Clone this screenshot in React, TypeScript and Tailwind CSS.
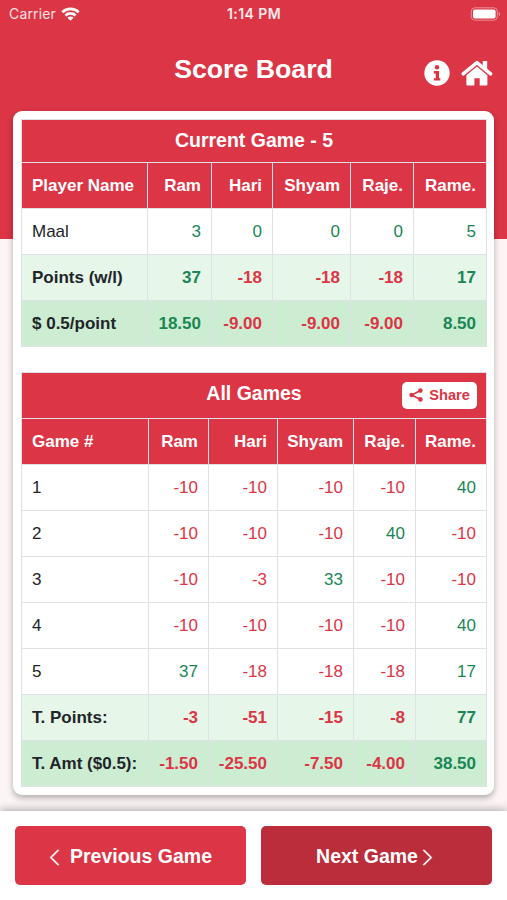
import React from "react";
import clsx from "clsx";
import { BsChevronLeft, BsChevronRight } from "react-icons/bs";

type Row = {
  label: string;
  values: string[];
  variant?: "points" | "amount";
};

type ScoreTableProps = {
  title: string;
  firstColumn: string;
  widths: number[];
  rows: Row[];
  titleClass: string;
  action?: React.ReactNode;
};

const players = ["Ram", "Hari", "Shyam", "Raje.", "Rame."];

const currentGame: Row[] = [
  { label: "Maal", values: ["3", "0", "0", "0", "5"] },
  { label: "Points (w/l)", values: ["37", "-18", "-18", "-18", "17"], variant: "points" },
  { label: "$ 0.5/point", values: ["18.50", "-9.00", "-9.00", "-9.00", "8.50"], variant: "amount" },
];

const allGames: Row[] = [
  { label: "1", values: ["-10", "-10", "-10", "-10", "40"] },
  { label: "2", values: ["-10", "-10", "-10", "40", "-10"] },
  { label: "3", values: ["-10", "-3", "33", "-10", "-10"] },
  { label: "4", values: ["-10", "-10", "-10", "-10", "40"] },
  { label: "5", values: ["37", "-18", "-18", "-18", "17"] },
  { label: "T. Points:", values: ["-3", "-51", "-15", "-8", "77"], variant: "points" },
  { label: "T. Amt ($0.5):", values: ["-1.50", "-25.50", "-7.50", "-4.00", "38.50"], variant: "amount" },
];

function StatusBar() {
  return (
    <div className="grid h-[27px] grid-cols-[1fr_auto_1fr] items-center pl-[9px] pr-[8px] font-['Inter',sans-serif] text-[14px] text-white">
      <div className="flex items-center gap-[5px] text-white/85">
        <span className="tracking-[0.15px]">Carrier</span>
        <svg className="h-[14px] w-[19px] text-white" viewBox="0 0 19 14" fill="none" stroke="currentColor" strokeWidth="2.6">
          <path d="M1.3 5.2a11.7 11.7 0 0 1 16.4 0" />
          <path d="M4.4 8.5a7.3 7.3 0 0 1 10.2 0" />
          <path d="M9.5 13.8 6.4 10.7a4.4 4.4 0 0 1 6.2 0z" fill="currentColor" stroke="none" />
        </svg>
      </div>
      <span className="text-center font-semibold tracking-[0.45px] text-white/90">1:14 PM</span>
      <svg className="-mr-[2px] h-[14px] w-[31px] justify-self-end" viewBox="0 0 31 14" fill="none">
        <rect x="1.3" y="0.8" width="26" height="12.4" rx="3.6" stroke="white" strokeOpacity="0.45" />
        <rect x="3" y="2.5" width="22.6" height="9" rx="2" fill="white" />
        <path d="M28.8 4.8v4.4c1.7-.7 1.7-3.7 0-4.4z" fill="white" fillOpacity="0.5" />
      </svg>
    </div>
  );
}

function InfoIcon() {
  return (
    <svg className="size-[26px]" viewBox="0 0 26 26">
      <circle cx="13" cy="13" r="12.7" fill="white" />
      <circle cx="13" cy="7.3" r="2.2" fill="#dc3545" />
      <path d="M9.8 11.1h5.2v7.1h1.3v2.4H9.8v-2.4h1.9v-4.6H9.8z" fill="#dc3545" />
    </svg>
  );
}

function HomeIcon() {
  return (
    <svg className="h-[26px] w-[32px]" viewBox="0 0 32 26" fill="currentColor">
      <path d="M21.8 1h4.4v9l-4.4-3.6z" />
      <path d="M2.2 13.9 15.9 2.6l13.7 11.3" fill="none" stroke="currentColor" strokeWidth="3.4" strokeLinecap="round" strokeLinejoin="round" />
      <path d="M5.4 15.2 15.9 6.6l10.5 8.6v9.3a1 1 0 0 1-1 1h-6.7v-7.3h-5.3v7.3H6.4a1 1 0 0 1-1-1z" />
    </svg>
  );
}

function ShareIcon() {
  return (
    <svg className="size-[14px]" viewBox="0 0 14 14" fill="currentColor">
      <path d="M11.5 2.5 2.7 7l8.8 4.5" fill="none" stroke="currentColor" strokeWidth="1.6" />
      <circle cx="11.4" cy="2.6" r="2.3" />
      <circle cx="2.6" cy="7" r="2.3" />
      <circle cx="11.4" cy="11.4" r="2.3" />
    </svg>
  );
}

function ScoreTable({ title, firstColumn, widths, rows, titleClass, action }: ScoreTableProps) {
  return (
    <table className="w-[465px] table-fixed border-collapse text-[17px] leading-[20px]">
      <colgroup>
        {widths.map((width, i) => (
          <col key={i} style={{ width }} />
        ))}
      </colgroup>
      <thead className="bg-[#dc3545] text-white">
        <tr className={titleClass}>
          <th colSpan={6} className="border border-[#dee2e6] p-0 text-[19.5px] font-bold">
            <div className="grid grid-cols-[1fr_auto_1fr] items-center px-[9px] pb-[2px]">
              <span />
              <span className={clsx("leading-[20px]", action && "pb-[3px]")}>{title}</span>
              {action}
            </div>
          </th>
        </tr>
        <tr className="h-[46px]">
          <th className="border border-[#dee2e6] py-0 pl-[10px] pr-0 text-left">{firstColumn}</th>
          {players.map(player => (
            <th key={player} className="border border-[#dee2e6] py-0 pl-0 pr-[10px] text-right">
              {player}
            </th>
          ))}
        </tr>
      </thead>
      <tbody>
        {rows.map(row => (
          <tr
            key={row.label}
            className={clsx(
              "h-[46px]",
              row.variant && "font-bold",
              row.variant === "points" && "bg-[#e6f6e8]",
              row.variant === "amount" && "bg-[#cdedd2]"
            )}
          >
            <td className="whitespace-nowrap border border-[#dee2e6] py-0 pl-[10px] pr-0 text-[#212529]">{row.label}</td>
            {row.values.map((value, i) => (
              <td
                key={i}
                className={clsx(
                  "whitespace-nowrap border border-[#dee2e6] py-0 pl-0 pr-[10px] text-right",
                  value.startsWith("-") ? "text-[#dc3545]" : "text-[#198754]"
                )}
              >
                {value}
              </td>
            ))}
          </tr>
        ))}
      </tbody>
    </table>
  );
}

export default function App() {
  return (
    <div className="flex h-[900px] w-[507px] flex-col overflow-hidden bg-[linear-gradient(#dc3545_239px,#fdf5f5_239px)] font-['Liberation_Sans',Arial,sans-serif]">
      <StatusBar />

      {/* Header */}
      <header className="grid h-[84px] grid-cols-[1fr_auto_1fr] items-center text-white">
        <span />
        <h1 className="text-[26.7px] font-bold leading-[84px]">Score Board</h1>
        <div className="flex items-center justify-end gap-[11px] pr-[14px] pt-[8px]">
          <InfoIcon />
          <HomeIcon />
        </div>
      </header>

      {/* Score card */}
      <main className="mx-[13px] h-[684px] shrink-0 rounded-[9px] bg-white px-[8px] pt-[8px] shadow-[0_3px_6px_rgba(0,0,0,0.3)]">
        <ScoreTable
          title="Current Game - 5"
          firstColumn="Player Name"
          widths={[126, 64, 61, 78, 63, 73]}
          rows={currentGame}
          titleClass="h-[43px]"
        />
        <div className="h-[25px]" />
        <ScoreTable
          title="All Games"
          firstColumn="Game #"
          widths={[127, 60, 69, 76, 62, 71]}
          rows={allGames}
          titleClass="h-[46px]"
          action={
            <button className="mt-[1px] flex h-[27px] w-[75px] items-center justify-center gap-[6px] justify-self-end rounded-[5px] bg-white text-[14.6px] font-bold text-[#dc3545]">
              <ShareIcon />
              Share
            </button>
          }
        />
      </main>

      {/* Bottom navigation */}
      <footer className="mt-auto flex h-[89px] shrink-0 gap-[15px] bg-white px-[15px] pt-[15px] text-[19.5px] font-bold text-white shadow-[0_-2px_8px_rgba(0,0,0,0.28)]">
        <button className="flex h-[59px] w-[231px] items-center justify-center gap-[6px] rounded-[5px] bg-[#dc3545] pr-[4px] pt-[2px]">
          <BsChevronLeft className="mt-[2px] size-[19px] [stroke-width:0.6]" />
          Previous Game
        </button>
        <button className="flex h-[59px] w-[231px] items-center justify-center rounded-[5px] bg-[#bb2d3b] pt-[2px]">
          Next Game
          <BsChevronRight className="mt-[2px] size-[19px] [stroke-width:0.6]" />
        </button>
      </footer>
    </div>
  );
}
